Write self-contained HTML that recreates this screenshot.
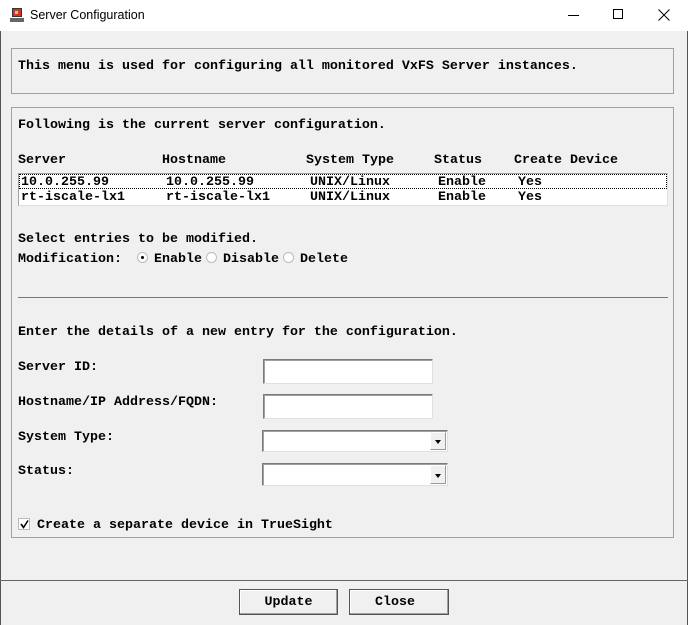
<!DOCTYPE html>
<html><head><style>
*{margin:0;padding:0;box-sizing:border-box}
body{width:688px;height:625px;background:#f0f0f0;position:relative;overflow:hidden;font-family:"Liberation Mono",monospace;font-weight:bold;font-size:13.33px;color:#000}
.a{position:absolute;white-space:pre;line-height:14px;margin-top:1px}
.title{position:absolute;left:0;top:0;width:688px;height:31px;background:#fff;font-family:"Liberation Sans",sans-serif;font-weight:normal;font-size:12.5px}
.panel{position:absolute;border:1px solid #a0a0a0}
.inp{position:absolute;background:#fff;border:1px solid #7a7a7a;border-right-color:#e0e0e0;border-bottom-color:#e0e0e0;box-shadow:inset 1px 1px 0 #a0a0a0}
.btn{position:absolute;background:#f0f0f0;border:1px solid #555;box-shadow:inset -1px -1px 0 #a0a0a0,inset 1px 1px 0 #fff;text-align:center;line-height:25px}
.rad{position:absolute;width:11px;height:11px;border-radius:50%;background:#fff;border:1px solid #bbb}
</style></head><body>
<div style="position:absolute;left:0;top:0;width:1px;height:625px;background:#555"></div>
<div style="position:absolute;right:0;top:0;width:1px;height:625px;background:#555"></div>
<div class="title">
<svg style="position:absolute;left:9px;top:7px" width="16" height="16"><rect x="3" y="1" width="10" height="9" fill="#333"/><rect x="4" y="2" width="8" height="7" fill="#c33"/><rect x="6" y="4" width="3" height="3" fill="#fc0"/><rect x="1" y="11" width="14" height="4" fill="#666"/></svg>
<span style="position:absolute;left:30px;top:8px">Server Configuration</span>
<div style="position:absolute;left:568px;top:15px;width:11px;height:1px;background:#000"></div>
<div style="position:absolute;left:613px;top:9px;width:10px;height:10px;border:1px solid #000"></div>
<svg style="position:absolute;left:658px;top:9px" width="12" height="12"><path d="M0.5 0.5L11.5 11.5M11.5 0.5L0.5 11.5" stroke="#000" stroke-width="1"/></svg>
</div>

<div class="panel" style="left:11px;top:48px;width:663px;height:46px"></div>
<div class="a" style="left:18px;top:59px">This menu is used for configuring all monitored VxFS Server instances.</div>

<div class="panel" style="left:11px;top:107px;width:663px;height:431px"></div>
<div class="a" style="left:18px;top:118px">Following is the current server configuration.</div>
<div class="a" style="left:18px;top:153px">Server</div>
<div class="a" style="left:162px;top:153px">Hostname</div>
<div class="a" style="left:306px;top:153px">System Type</div>
<div class="a" style="left:434px;top:153px">Status</div>
<div class="a" style="left:514px;top:153px">Create Device</div>
<div style="position:absolute;left:18px;top:173px;width:650px;height:33px;background:#fff;border:1px solid #a0a0a0;border-right-color:#e0e0e0;border-bottom-color:#e0e0e0"></div>
<div style="position:absolute;left:19px;top:174px;width:648px;height:15px;border:1px dotted #000"></div>
<div class="a" style="left:21px;top:175px">10.0.255.99</div>
<div class="a" style="left:166px;top:175px">10.0.255.99</div>
<div class="a" style="left:310px;top:175px">UNIX/Linux</div>
<div class="a" style="left:438px;top:175px">Enable</div>
<div class="a" style="left:518px;top:175px">Yes</div>
<div class="a" style="left:21px;top:190px">rt-iscale-lx1</div>
<div class="a" style="left:166px;top:190px">rt-iscale-lx1</div>
<div class="a" style="left:310px;top:190px">UNIX/Linux</div>
<div class="a" style="left:438px;top:190px">Enable</div>
<div class="a" style="left:518px;top:190px">Yes</div>

<div class="a" style="left:18px;top:232px">Select entries to be modified.</div>
<div class="a" style="left:18px;top:252px">Modification:</div>
<div class="rad" style="left:137px;top:252px"><div style="position:absolute;left:3px;top:3px;width:3px;height:3px;background:#000;border-radius:50%"></div></div>
<div class="a" style="left:154px;top:252px">Enable</div>
<div class="rad" style="left:206px;top:252px"></div>
<div class="a" style="left:223px;top:252px">Disable</div>
<div class="rad" style="left:283px;top:252px"></div>
<div class="a" style="left:300px;top:252px">Delete</div>

<div style="position:absolute;left:18px;top:297px;width:650px;height:1px;background:#777"></div>
<div class="a" style="left:18px;top:325px">Enter the details of a new entry for the configuration.</div>
<div class="a" style="left:18px;top:360px">Server ID:</div>
<div class="inp" style="left:263px;top:359px;width:170px;height:25px"></div>
<div class="a" style="left:18px;top:395px">Hostname/IP Address/FQDN:</div>
<div class="inp" style="left:263px;top:394px;width:170px;height:25px"></div>
<div class="a" style="left:18px;top:430px">System Type:</div>
<div class="inp" style="left:262px;top:430px;width:186px;height:22px"><div style="position:absolute;right:1px;top:1px;width:16px;height:18px;background:#f0f0f0;border:1px solid #999;border-top-color:#fff;border-left-color:#fff"><div style="position:absolute;left:4px;top:7px;border-left:3px solid transparent;border-right:3px solid transparent;border-top:4px solid #000"></div></div></div>
<div class="a" style="left:18px;top:464px">Status:</div>
<div class="inp" style="left:262px;top:463px;width:186px;height:23px"><div style="position:absolute;right:1px;top:1px;width:16px;height:19px;background:#f0f0f0;border:1px solid #999;border-top-color:#fff;border-left-color:#fff"><div style="position:absolute;left:4px;top:8px;border-left:3px solid transparent;border-right:3px solid transparent;border-top:4px solid #000"></div></div></div>

<div style="position:absolute;left:18px;top:518px;width:12px;height:12px;background:#fff;border:1px solid #bbb"><svg style="position:absolute;left:1px;top:1px" width="9" height="9"><path d="M1 4L3.5 7.5L8 0.5" stroke="#000" stroke-width="1.6" fill="none"/></svg></div>
<div class="a" style="left:37px;top:518px">Create a separate device in TrueSight</div>

<div style="position:absolute;left:0;top:580px;width:688px;height:1px;background:#666"></div>
<div class="btn" style="left:239px;top:589px;width:99px;height:26px">Update</div>
<div class="btn" style="left:349px;top:589px;width:100px;height:26px;padding-right:8px">Close</div>
</body></html>
